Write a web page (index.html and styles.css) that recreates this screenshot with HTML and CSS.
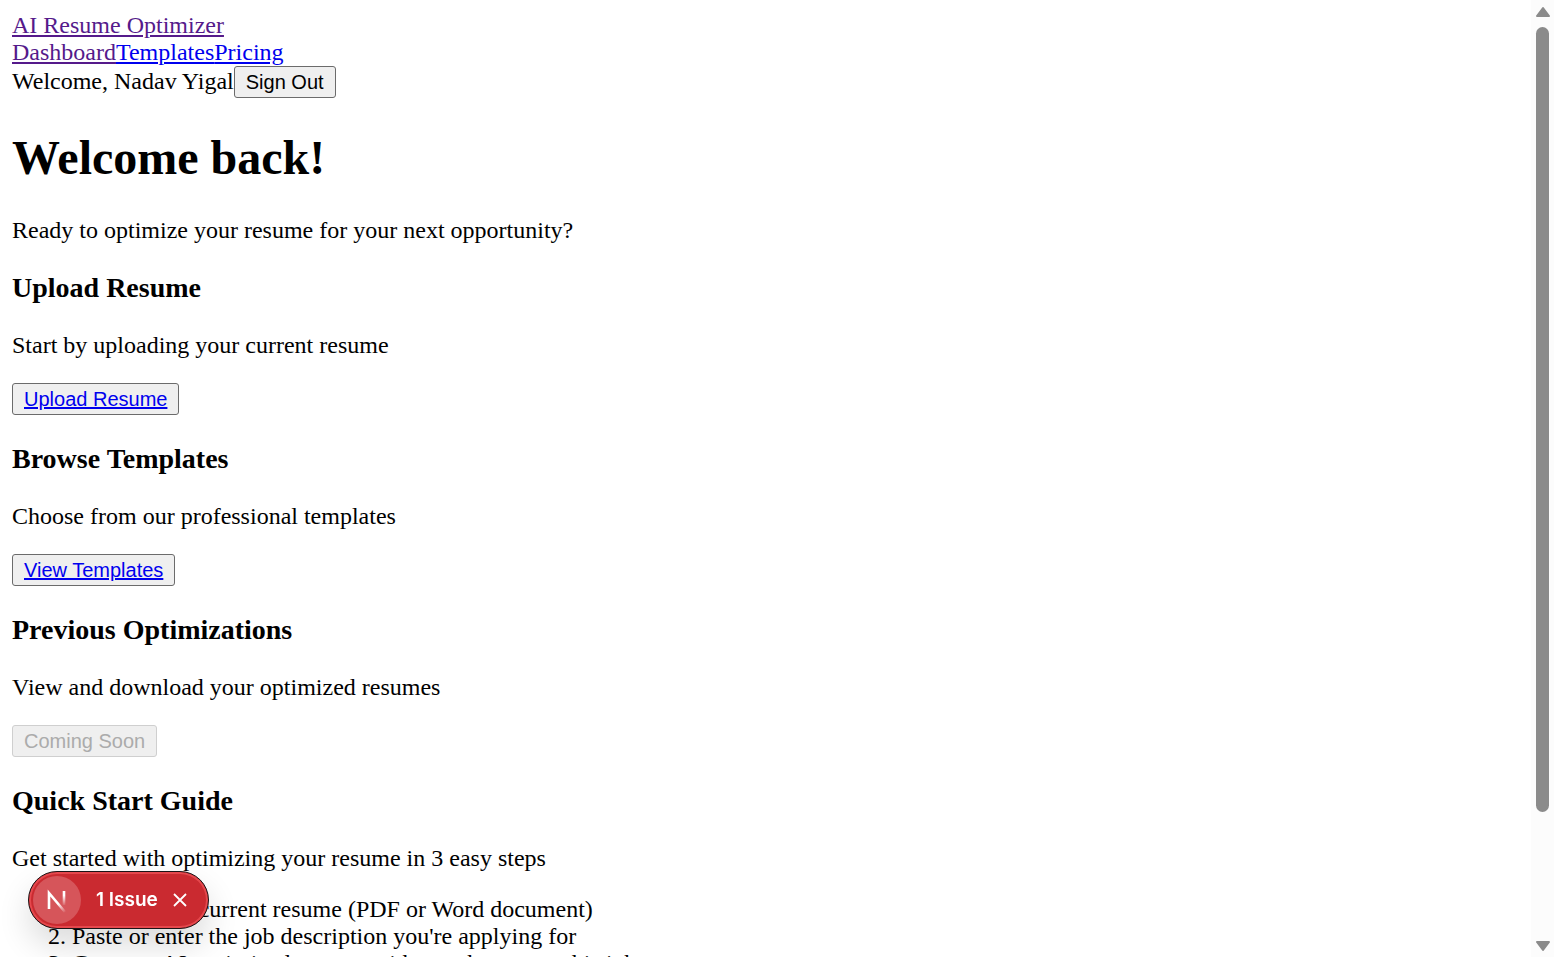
FILE: index.html
```html
<!DOCTYPE html>
<html lang="en">
<head>
<meta charset="utf-8">
<title>AI Resume Optimizer</title>
<link rel="stylesheet" href="styles.css">
</head>
<body>
<div class="page">
  <div class="content">
    <header class="header">
      <div><a class="visited" href="#home">AI Resume Optimizer</a></div>
      <nav class="nav"><a class="visited" href="#dashboard">Dashboard</a><a class="link" href="#templates">Templates</a><a class="link" href="#pricing">Pricing</a></nav>
      <div class="account"><span>Welcome, Nadav Yigal</span><button class="button" type="button">Sign Out</button></div>
    </header>
    <main>
      <h1 class="title">Welcome back!</h1>
      <p class="text">Ready to optimize your resume for your next opportunity?</p>
      <section>
        <h3 class="heading">Upload Resume</h3>
        <p class="text">Start by uploading your current resume</p>
        <a class="button link" href="#upload">Upload Resume</a>
      </section>
      <section>
        <h3 class="heading">Browse Templates</h3>
        <p class="text">Choose from our professional templates</p>
        <a class="button link" href="#browse">View Templates</a>
      </section>
      <section>
        <h3 class="heading">Previous Optimizations</h3>
        <p class="text">View and download your optimized resumes</p>
        <button class="button" type="button" disabled>Coming Soon</button>
      </section>
      <section>
        <h3 class="heading">Quick Start Guide</h3>
        <p class="text">Get started with optimizing your resume in 3 easy steps</p>
        <ol class="steps">
          <li>Upload your current resume (PDF or Word document)</li>
          <li>Paste or enter the job description you're applying for</li>
          <li>Get your AI-optimized resume with match score at this job</li>
        </ol>
      </section>
    </main>
  </div>
  <div class="scrollbar" aria-hidden="true">
    <svg class="arrow" viewBox="0 0 16 12"><path d="M8 2 L14 10 H2 Z"/></svg>
    <div class="track"><div class="thumb"></div></div>
    <svg class="arrow" viewBox="0 0 16 12"><path d="M8 10 L14 2 H2 Z"/></svg>
  </div>
</div>
<div class="badge">
  <button class="logo" type="button" aria-label="Open Next.js Dev Tools">
    <svg class="mark" viewBox="0 0 48 48" fill="none">
      <defs>
        <linearGradient id="stem" x1="0" y1="15" x2="0" y2="30" gradientUnits="userSpaceOnUse"><stop offset=".3" stop-color="#fff"/><stop offset="1" stop-color="#fff" stop-opacity="0"/></linearGradient>
        <linearGradient id="diagonal" x1="26" y1="27" x2="33" y2="36" gradientUnits="userSpaceOnUse"><stop stop-color="#fff"/><stop offset="1" stop-color="#fff" stop-opacity="0"/></linearGradient>
      </defs>
      <path d="M16 33V17L32 36" stroke="url(#diagonal)" stroke-width="2.6"/>
      <path d="M31 15V29" stroke="url(#stem)" stroke-width="2.6"/>
    </svg>
  </button>
  <button class="issues" type="button">1 Issue</button>
  <button class="close" type="button" aria-label="Close">
    <svg class="cross" viewBox="0 0 14 14" fill="none" stroke="#fff" stroke-width="1.8"><path d="M1 1L13 13M13 1L1 13"/></svg>
  </button>
</div>
</body>
</html>
```
FILE: styles.css
```css
* { box-sizing: border-box; }
body {
  margin: 0;
  background: #fff;
  color: #000;
  font: 24px/27px "Liberation Serif", serif;
}
.page { display: flex; height: 100vh; overflow: hidden; }
.content { flex: 1; min-width: 0; overflow: hidden; padding: 12px; }
.link { color: #0000ee; text-decoration: underline; }
.visited { color: #551a8b; }
.button {
  display: inline-block;
  height: 32px;
  padding: 0 11px;
  border: 1px solid #6b6b6b;
  border-radius: 3px;
  background: #efefef;
  color: #000;
  font: 20px/30px "Liberation Sans", sans-serif;
}
.button.link { color: #0000ee; }
.button:disabled { border-color: #cfcfcf; color: #ababab; }
.title { margin: 32px 0; font-size: 48px; line-height: 55px; }
.heading { margin: 28px 0; font-size: 28px; line-height: 32px; }
.text { margin: 24px 0; }
.steps { margin: 24px 0; padding-left: 60px; }
.scrollbar {
  display: flex;
  flex-direction: column;
  align-items: center;
  width: 23px;
  padding: 6px 0 5px;
  background: #fcfcfc;
}
.arrow { width: 16px; height: 12px; fill: #8b8b8b; stroke: #8b8b8b; stroke-width: 2; stroke-linejoin: round; }
.track { flex: 1; padding-top: 9px; }
.thumb { width: 13px; height: 86%; border-radius: 7px; background: #8b8b8b; }
.badge {
  position: fixed;
  left: 28px;
  bottom: 28px;
  display: flex;
  align-items: center;
  width: 181px;
  height: 58px;
  padding: 4px;
  border: 1px solid #1c1416;
  border-radius: 29px;
  background: #ca2a30;
  box-shadow: inset 0 0 0 2px #e5484d, 0 16px 32px rgba(0, 0, 0, .14);
}
.logo, .issues, .close { padding: 0; border: 0; background: none; color: #fff; }
.logo { width: 48px; height: 48px; border-radius: 50%; background: #d6555a; }
.mark { display: block; width: 48px; height: 48px; }
.issues { margin-left: 15px; font: 600 19px/26px Inter, sans-serif; }
.close { margin-left: 15px; }
.cross { display: block; width: 14px; height: 14px; }
```
